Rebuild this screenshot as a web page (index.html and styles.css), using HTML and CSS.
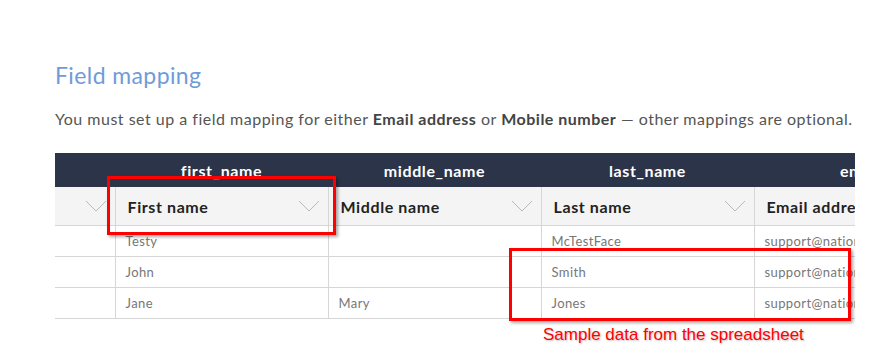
FILE: index.html
```html
<!DOCTYPE html>
<html lang="en">
<head>
    <meta charset="UTF-8">
    <meta name="viewport" content="width=device-width, initial-scale=1.0">
    <title>Field mapping</title>
    <link rel="stylesheet" href="styles.css">
</head>
<body>
    <div class="page">
        <h2 class="title">Field mapping</h2>
        <p class="lead">You must set up a field mapping for either <strong>Email address</strong> or <strong>Mobile number</strong> — other mappings are optional.</p>

        <div class="table-wrap">
            <table class="mapping">
                <colgroup>
                    <col class="c-first">
                    <col class="c-col">
                    <col class="c-col">
                    <col class="c-col">
                    <col class="c-col">
                </colgroup>
                <thead>
                    <tr class="source">
                        <th></th>
                        <th>first_name</th>
                        <th>middle_name</th>
                        <th>last_name</th>
                        <th>email</th>
                    </tr>
                    <tr class="target">
                        <th><div class="select"><span></span><svg class="chev" viewBox="0 0 22 12"><polyline points="1,1 11,11 21,1"/></svg></div></th>
                        <th><div class="select"><span>First name</span><svg class="chev" viewBox="0 0 22 12"><polyline points="1,1 11,11 21,1"/></svg></div></th>
                        <th><div class="select"><span>Middle name</span><svg class="chev" viewBox="0 0 22 12"><polyline points="1,1 11,11 21,1"/></svg></div></th>
                        <th><div class="select"><span>Last name</span><svg class="chev" viewBox="0 0 22 12"><polyline points="1,1 11,11 21,1"/></svg></div></th>
                        <th><div class="select"><span>Email address</span><svg class="chev" viewBox="0 0 22 12"><polyline points="1,1 11,11 21,1"/></svg></div></th>
                    </tr>
                </thead>
                <tbody>
                    <tr>
                        <td></td>
                        <td>Testy</td>
                        <td></td>
                        <td>McTestFace</td>
                        <td>support@nationbuilder.com</td>
                    </tr>
                    <tr>
                        <td></td>
                        <td>John</td>
                        <td></td>
                        <td>Smith</td>
                        <td>support@nationbuilder.com</td>
                    </tr>
                    <tr>
                        <td></td>
                        <td>Jane</td>
                        <td>Mary</td>
                        <td>Jones</td>
                        <td>support@nationbuilder.com</td>
                    </tr>
                </tbody>
            </table>
        </div>

        <!-- annotations drawn over the screenshot -->
        <div class="mark mark-select"></div>
        <div class="mark mark-data"></div>
        <div class="mark-note">Sample data from the spreadsheet</div>
    </div>
</body>
</html>
```

FILE: styles.css
```css
body {
    margin: 0;
    background: #fff;
    font-family: Lato, "Open Sans", sans-serif;
    color: #555;
}
.page {
    position: relative;
    padding: 61px 0 0 55px;
    height: 353px;
    box-sizing: border-box;
}
.title {
    margin: 0;
    font-size: 23px;
    font-weight: 400;
    letter-spacing: 0.4px;
    color: #6f9bd9;
    line-height: 28px;
}
.lead {
    margin: 18px 0 0;
    font-size: 16px;
    letter-spacing: 0.5px;
    line-height: 24px;
    color: #555;
}
.lead strong {
    color: #444;
}
.table-wrap {
    margin-top: 22px;
    width: 800px;
    overflow: hidden;
}
.mapping {
    border-collapse: collapse;
    table-layout: fixed;
    width: 912px;
}
.c-first {
    width: 60px;
}
.c-col {
    width: 213px;
}
.source th {
    background: #2b3449;
    color: #fff;
    font-size: 16px;
    font-weight: 700;
    letter-spacing: 0.6px;
    height: 34px;
    padding: 0;
    text-align: center;
}
.target th {
    background: #f4f4f4;
    height: 38px;
    padding: 0;
    border-left: 1px solid #d6d6d6;
    border-bottom: 1px solid #d6d6d6;
    text-align: left;
}
.target th:first-child {
    border-left: none;
}
.select {
    display: flex;
    align-items: center;
    justify-content: space-between;
    padding: 0 8px 0 12px;
    font-size: 16px;
    font-weight: 700;
    letter-spacing: 0.6px;
    color: #222;
    white-space: nowrap;
}
.chev {
    width: 22px;
    height: 12px;
    flex: none;
}
.chev polyline {
    fill: none;
    stroke: #b9b9b9;
    stroke-width: 1;
}
.mapping td {
    height: 30px;
    padding: 0 10px;
    font-size: 13px;
    letter-spacing: 0.4px;
    color: #777;
    border-left: 1px solid #d6d6d6;
    border-bottom: 1px solid #d6d6d6;
    white-space: nowrap;
    overflow: hidden;
}
.mapping td:first-child {
    border-left: none;
}
.mark {
    position: absolute;
    border: 3px solid #f00;
    box-shadow: 2px 2px 3px rgba(0, 0, 0, 0.35);
}
.mark-select {
    left: 107px;
    top: 176px;
    width: 223px;
    height: 53px;
}
.mark-data {
    left: 509px;
    top: 248px;
    width: 336px;
    height: 67px;
}
.mark-note {
    position: absolute;
    left: 543px;
    top: 325px;
    font-family: "Liberation Sans", Arial, sans-serif;
    font-size: 17px;
    color: #f00;
    text-shadow: 1px 1px 2px rgba(0, 0, 0, 0.25);
}
```
